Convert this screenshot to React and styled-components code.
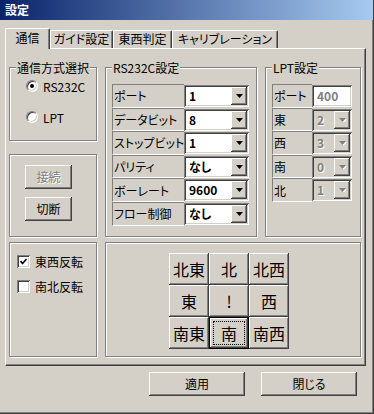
import React from 'react';
import styled, { createGlobalStyle, css } from 'styled-components';

const GlobalStyle = createGlobalStyle`
  html, body {
    margin: 0;
    padding: 0;
    background: #d4d0c8;
  }
  body {
    font-family: "Noto Sans CJK JP", "Noto Sans", sans-serif;
    font-size: 12px;
    font-feature-settings: "palt";
    color: #000;
  }
  * {
    box-sizing: border-box;
  }
`;

const raised = css`
  background: #d4d0c8;
  box-shadow: inset -1px -1px 0 #404040, inset 1px 1px 0 #ffffff,
    inset -2px -2px 0 #808080, inset 2px 2px 0 #d4d0c8;
`;

const sunken = css`
  box-shadow: inset 1px 1px 0 #808080, inset -1px -1px 0 #ffffff,
    inset 2px 2px 0 #404040, inset -2px -2px 0 #d4d0c8;
`;

const Window = styled.div`
  width: 374px;
  height: 414px;
  background: #d4d0c8;
  border-right: 1px solid #404040;
  border-bottom: 1px solid #404040;
  box-shadow: inset -1px -1px 0 #808080;
  display: flex;
  flex-direction: column;
`;

const TitleBar = styled.div`
  height: 20px;
  flex: none;
  padding-left: 5px;
  background: linear-gradient(to right, #0a246a, #a6caf0);
  color: #fff;
  font-weight: bold;
  line-height: 20px;
`;

const Body = styled.div`
  display: flex;
  flex-direction: column;
  padding: 8px 7px 0 5px;
`;

const TabStrip = styled.div`
  display: flex;
  align-items: flex-end;
  height: 20px;
`;

const Tab = styled.div`
  position: relative;
  width: ${p => p.$w}px;
  height: ${p => (p.$active ? 21 : 18)}px;
  margin-bottom: ${p => (p.$active ? -1 : 0)}px;
  z-index: ${p => (p.$active ? 1 : 0)};
  background: #d4d0c8;
  border-top: 1px solid #fff;
  border-left: 1px solid #fff;
  border-right: 1px solid #404040;
  border-radius: 2px 2px 0 0;
  box-shadow: inset -1px 0 0 #808080;
  text-align: center;
  line-height: ${p => (p.$active ? 18 : 16)}px;
  white-space: nowrap;
`;

const TabPanel = styled.div`
  height: 318px;
  border: 1px solid;
  border-color: #fff #404040 #404040 #fff;
  box-shadow: inset -1px -1px 0 #808080;
  padding: 18px 3px 8px 3px;
  display: flex;
  flex-direction: column;
  gap: 5px;
`;

const TopRow = styled.div`
  display: grid;
  grid-template-columns: 88px 152px 96px;
  column-gap: 8px;
  height: 170px;
`;

const BottomRow = styled.div`
  display: grid;
  grid-template-columns: 88px 256px;
  column-gap: 8px;
  height: 115px;
`;

const LeftCol = styled.div`
  display: flex;
  flex-direction: column;
  gap: 13px;
`;

const Group = styled.div`
  position: relative;
  border: 1px solid #808080;
  box-shadow: inset 1px 1px 0 #fff, 1px 1px 0 #fff;
  height: ${p => (p.$h ? `${p.$h}px` : 'auto')};
  flex: ${p => (p.$h ? 'none' : '1')};
  padding: ${p => p.$pad || '0'};
`;

const Legend = styled.span`
  position: absolute;
  top: -8px;
  left: 6px;
  padding: 0 1px;
  background: #d4d0c8;
  line-height: 15px;
  white-space: nowrap;
`;

const OptionRow = styled.label`
  display: flex;
  align-items: center;
  gap: 5px;
  height: 16px;
  margin-bottom: ${p => p.$gap || 0}px;
  white-space: nowrap;
`;

const RadioCircle = styled.span`
  position: relative;
  width: 12px;
  height: 12px;
  border-radius: 50%;
  background: #fff;
  border: 1px solid;
  border-color: #808080 #fff #fff #808080;
  box-shadow: inset 1px 1px 0 #404040, inset -1px -1px 0 #d4d0c8;
  &::after {
    content: '';
    display: ${p => (p.$on ? 'block' : 'none')};
    position: absolute;
    left: 3px;
    top: 3px;
    width: 4px;
    height: 4px;
    border-radius: 50%;
    background: #000;
  }
`;

const CheckBox = styled.span`
  width: 13px;
  height: 13px;
  background: #fff;
  ${sunken};
  display: flex;
  align-items: center;
  justify-content: center;
`;

const Button = styled.button`
  ${raised};
  width: ${p => p.$w}px;
  height: ${p => p.$h || 24}px;
  border: none;
  padding: 0;
  font-family: inherit;
  font-feature-settings: "palt";
  font-size: ${p => p.$fs || 12}px;
  color: ${p => (p.$disabled ? '#808080' : '#000')};
  text-shadow: ${p => (p.$disabled ? '1px 1px 0 #fff' : 'none')};
  line-height: 1;
  display: flex;
  align-items: center;
  justify-content: center;
`;

const FocusButton = styled(Button)`
  border: 1px solid #000;
  box-shadow: inset -1px -1px 0 #404040, inset 1px 1px 0 #ffffff,
    inset -2px -2px 0 #808080;
  outline: 1px dotted #000;
  outline-offset: -5px;
`;

const ButtonStack = styled.div`
  display: flex;
  flex-direction: column;
  gap: 8px;
`;

const Table = styled.div`
  display: grid;
  grid-template-columns: ${p => p.$cols};
  grid-auto-rows: 23.6px;
`;

const LabelCell = styled.div`
  display: flex;
  align-items: center;
  padding-left: 1px;
  border-top: 1px solid #808080;
  border-left: 1px solid #808080;
  border-bottom: 1px solid #fff;
  white-space: nowrap;
  overflow: hidden;
`;

const Combo = styled.div`
  display: flex;
  align-items: center;
  height: 22px;
  margin-top: 1px;
  padding: 2px;
  background: ${p => (p.$disabled ? '#d4d0c8' : '#fff')};
  ${sunken};
`;

const ComboValue = styled.span`
  flex: 1;
  padding-left: 3px;
  font-weight: bold;
  color: ${p => (p.$disabled ? '#808080' : '#000')};
  text-shadow: ${p => (p.$disabled ? '1px 1px 0 #fff' : 'none')};
  line-height: 18px;
`;

const DropButton = styled.span`
  ${raised};
  width: 16px;
  height: 18px;
  display: flex;
  align-items: center;
  justify-content: center;
`;

const DirGrid = styled.div`
  display: grid;
  grid-template-columns: repeat(3, 40px);
  grid-auto-rows: 32px;
  margin: 10px 0 0 63px;
`;

const Footer = styled.div`
  display: flex;
  justify-content: flex-end;
  gap: 16px;
  padding: 6px 9px 0 0;
`;

function Arrow({ disabled }) {
  return (
    <svg width="7" height="4" viewBox="0 0 7 4">
      {disabled && <polygon points="1,1 8,1 4.5,5" fill="#fff" />}
      <polygon points="0,0 7,0 3.5,4" fill={disabled ? '#808080' : '#000'} />
    </svg>
  );
}

function ComboBox({ value, disabled }) {
  return (
    <Combo $disabled={disabled}>
      <ComboValue $disabled={disabled}>{value}</ComboValue>
      <DropButton>
        <Arrow disabled={disabled} />
      </DropButton>
    </Combo>
  );
}

const rsRows = [
  ['ポート', '1'],
  ['データビット', '8'],
  ['ストップビット', '1'],
  ['パリティ', 'なし'],
  ['ボーレート', '9600'],
  ['フロー制御', 'なし'],
];

const lptRows = [
  ['東', '2'],
  ['西', '3'],
  ['南', '0'],
  ['北', '1'],
];

const dirs = ['北東', '北', '北西', '東', '!', '西', '南東', '南', '南西'];

export default function App() {
  return (
    <>
      <GlobalStyle />
      <Window>
        <TitleBar>設定</TitleBar>
        <Body>
          <TabStrip>
            <Tab $active $w={45}>通信</Tab>
            <Tab $w={63}>ガイド設定</Tab>
            <Tab $w={59}>東西判定</Tab>
            <Tab $w={106}>キャリブレーション</Tab>
          </TabStrip>
          <TabPanel>
            <TopRow>
              <LeftCol>
                <Group $h={74} $pad="10px 0 0 16px">
                  <Legend>通信方式選択</Legend>
                  <OptionRow $gap={15}>
                    <RadioCircle $on />
                    RS232C
                  </OptionRow>
                  <OptionRow>
                    <RadioCircle />
                    LPT
                  </OptionRow>
                </Group>
                <Group $pad="10px 0 0 15px">
                  <ButtonStack>
                    <Button $w={47} $disabled>接続</Button>
                    <Button $w={47}>切断</Button>
                  </ButtonStack>
                </Group>
              </LeftCol>
              <Group $pad="16px 0 0 6px">
                <Legend>RS232C設定</Legend>
                <Table $cols="72px 65px">
                  {rsRows.map(([label, value]) => (
                    <React.Fragment key={label}>
                      <LabelCell>{label}</LabelCell>
                      <ComboBox value={value} />
                    </React.Fragment>
                  ))}
                </Table>
              </Group>
              <Group $pad="16px 0 0 6px">
                <Legend>LPT設定</Legend>
                <Table $cols="40px 40px">
                  <LabelCell>ポート</LabelCell>
                  <Combo>
                    <ComboValue $disabled>400</ComboValue>
                  </Combo>
                  {lptRows.map(([label, value]) => (
                    <React.Fragment key={label}>
                      <LabelCell>{label}</LabelCell>
                      <ComboBox value={value} disabled />
                    </React.Fragment>
                  ))}
                </Table>
              </Group>
            </TopRow>
            <BottomRow>
              <Group $pad="10px 0 0 7px">
                <OptionRow $gap={9}>
                  <CheckBox>
                    <svg width="7" height="7" viewBox="0 0 7 7">
                      <polyline points="0.5,3 2.5,5.5 6.5,1" fill="none" stroke="#000" strokeWidth="1.6" />
                    </svg>
                  </CheckBox>
                  東西反転
                </OptionRow>
                <OptionRow>
                  <CheckBox />
                  南北反転
                </OptionRow>
              </Group>
              <Group>
                <DirGrid>
                  {dirs.map(d =>
                    d === '南' ? (
                      <FocusButton key={d} $w={40} $h={32} $fs={16}>{d}</FocusButton>
                    ) : (
                      <Button key={d} $w={40} $h={32} $fs={16}>{d}</Button>
                    )
                  )}
                </DirGrid>
              </Group>
            </BottomRow>
          </TabPanel>
          <Footer>
            <Button $w={96}>適用</Button>
            <Button $w={96}>閉じる</Button>
          </Footer>
        </Body>
      </Window>
    </>
  );
}
